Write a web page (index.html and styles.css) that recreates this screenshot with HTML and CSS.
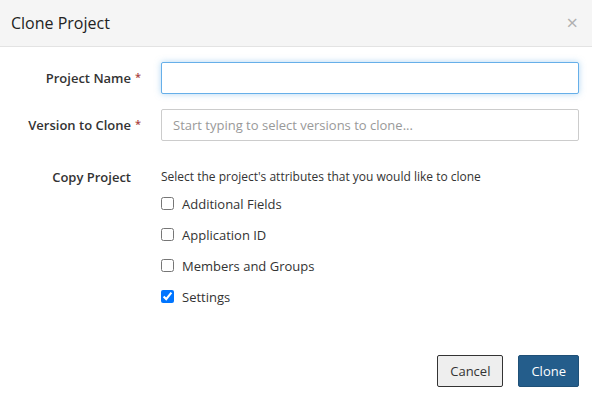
FILE: index.html
```html
<!DOCTYPE html>
<html lang="en">
<head>
  <meta charset="UTF-8" />
  <title>Clone Project</title>
  <link rel="stylesheet" href="styles.css">
</head>
<body>
  <div class="modal">
    <div class="modal-header">
      <h3>Clone Project</h3>
      <span class="close">&times;</span>
    </div>

    <form class="modal-body">
      <div class="form-row">
        <label class="field-label">Project Name <span class="req">*</span></label>
        <input type="text" class="input-box focused">
      </div>
      <div class="form-row">
        <label class="field-label">Version to Clone <span class="req">*</span></label>
        <input type="text" class="input-box" placeholder="Start typing to select versions to clone...">
      </div>
      <div class="form-row top">
        <label class="field-label">Copy Project</label>
        <div class="options">
          <p class="hint">Select the project's attributes that you would like to clone</p>
          <label class="check"><input type="checkbox"> Additional Fields</label>
          <label class="check"><input type="checkbox"> Application ID</label>
          <label class="check"><input type="checkbox"> Members and Groups</label>
          <label class="check"><input type="checkbox" checked> Settings</label>
        </div>
      </div>
    </form>

    <div class="modal-footer">
      <button class="btn btn-default">Cancel</button>
      <button class="btn btn-primary">Clone</button>
    </div>
  </div>
</body>
</html>
```

FILE: styles.css
```css
* { margin: 0; padding: 0; box-sizing: border-box; font-family: 'Open Sans', sans-serif; }

body {
  background: #fff;
  color: #333;
  font-size: 13px;
}

.modal {
  width: 592px;
  height: 397px;
  display: flex;
  flex-direction: column;
}

.modal-header {
  height: 47px;
  padding: 0 14px 0 11px;
  display: flex;
  justify-content: space-between;
  align-items: center;
  background: #f5f5f5;
  border-bottom: 1px solid #e3e3e3;
}

.modal-header h3 {
  font-size: 16px;
  font-weight: 400;
  color: #222;
}

.close {
  font-size: 20px;
  color: #b0b0b0;
  line-height: 1;
}

.modal-body {
  padding: 15px 13px 0 0;
  display: flex;
  flex-direction: column;
  gap: 15px;
}

.form-row {
  display: grid;
  grid-template-columns: 142px 1fr;
  column-gap: 19px;
  align-items: center;
}

.form-row.top {
  align-items: start;
  margin-top: 12px;
}

.field-label {
  position: relative;
  padding-right: 11px;
  text-align: right;
  font-weight: 600;
  color: #333;
}

.req {
  position: absolute;
  right: 1px;
  top: 0;
  color: #a94442;
  font-size: 11px;
}

.input-box {
  width: 100%;
  height: 32px;
  padding: 6px 11px;
  font-size: 13px;
  border: 1px solid #ccc;
  border-radius: 2px;
  outline: none;
  color: #555;
}

.input-box::placeholder { color: #999; }

.input-box.focused {
  border-color: #66afe9;
  box-shadow: 0 0 6px rgba(102, 175, 233, 0.5);
}

.options {
  display: flex;
  flex-direction: column;
}

.hint {
  font-size: 12px;
  line-height: 17px;
  margin-bottom: 3px;
}

.check {
  display: flex;
  align-items: center;
  gap: 8px;
  height: 31px;
  color: #333;
}

.check input {
  width: 13px;
  height: 13px;
  margin: 0;
}

.modal-footer {
  margin-top: auto;
  padding: 0 13px 10px 0;
  display: flex;
  justify-content: flex-end;
  gap: 15px;
}

.btn {
  height: 32px;
  padding: 0 12px;
  font-size: 13px;
  border-radius: 2px;
  cursor: pointer;
}

.btn-default {
  background: #eee;
  border: 1px solid #333;
  color: #333;
}

.btn-primary {
  background: #245d8b;
  border: 1px solid #1f5077;
  color: #fff;
}
```
